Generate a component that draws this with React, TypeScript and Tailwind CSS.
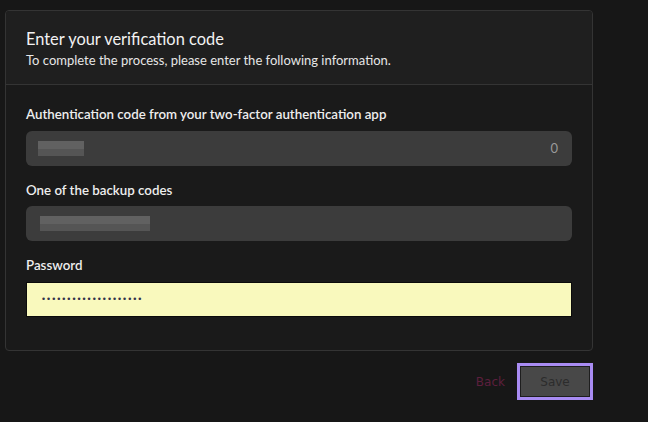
import React from 'react'

const sans = { fontFamily: 'Lato, "Noto Sans", sans-serif' }

function Blur({ w }: { w: number }) {
  // pixelated placeholder for hidden values
  return (
    <div className="flex flex-col gap-0" style={{ width: w }}>
      <div className="h-[8px] bg-[#6a6a6a] opacity-80" />
      <div className="h-[7px] bg-[#555555]" />
    </div>
  )
}

export default function App() {
  return (
    <div className="w-[648px] h-[422px] bg-[#171717] overflow-hidden pt-[10px]" style={sans}>
      <div className="ml-[5px] w-[588px] border border-[#343434] rounded-[4px] bg-[#1a1a1a] overflow-hidden">
        <div className="bg-[#1f1f1f] px-5 pt-[16px] pb-[15px] border-b border-[#343434]">
          <h2 className="text-[16.4px] leading-[24px] text-[#f2f2f2]">Enter your verification code</h2>
          <p className="text-[13px] leading-[18px] text-[#e6e6e6]">To complete the process, please enter the following information.</p>
        </div>
        <div className="px-5 pt-[19px] pb-[33px]">
          <label className="block text-[13.3px] leading-[20px] font-semibold text-[#eeeeee]">
            Authentication code from your two-factor authentication app
          </label>
          <div className="mt-[7px] h-[35px] w-[546px] rounded-[6px] bg-[#3c3c3c] flex items-center justify-between pl-[12px] pr-[14px]">
            <Blur w={46} />
            <span className="text-[13px] text-[#9a9a9a]">0</span>
          </div>
          <label className="mt-[14px] block text-[13.3px] leading-[20px] font-semibold text-[#eeeeee]">
            One of the backup codes
          </label>
          <div className="mt-[6px] h-[35px] w-[546px] rounded-[6px] bg-[#3c3c3c] flex items-center pl-[14px]">
            <Blur w={110} />
          </div>
          <label className="mt-[14px] block text-[13.3px] leading-[20px] font-semibold text-[#eeeeee]">
            Password
          </label>
          <div className="mt-[7px] h-[35px] w-[546px] border border-[#0b0b0b] bg-[#f9f9bd] flex items-center pl-[14px]">
            <span className="text-[8.6px] text-[#34344a]" style={{ fontFamily: '"DejaVu Sans", sans-serif' }}>
              ••••••••••••••••••••
            </span>
          </div>
        </div>
      </div>
      <div className="w-[593px] flex justify-end items-center gap-[12px] mt-[12px]" style={{ fontFamily: '"DejaVu Sans", sans-serif' }}>
        <span className="text-[12px] text-[#5c1f3d]">Back</span>
        <div className="border-[3px] border-[#a98cf3]">
          <div className="w-[70px] h-[31px] border border-[#1e1e1e] bg-[#484848] flex items-center justify-center text-[12px] text-[#2c2c2c]">
            Save
          </div>
        </div>
      </div>
    </div>
  )
}
